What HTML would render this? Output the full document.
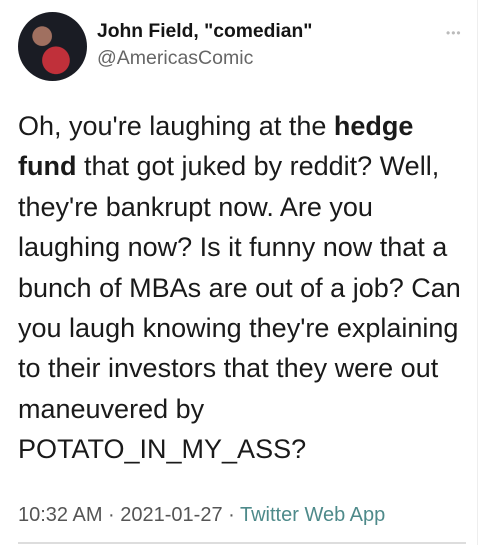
<!DOCTYPE html>
<html><head><style>
body{margin:0;width:486px;height:545px;background:#fff;overflow:hidden;position:relative;font-family:"Liberation Sans",Arial,sans-serif;}
.av{position:absolute;left:18px;top:12px;width:69px;height:69px;border-radius:50%;background:radial-gradient(circle at 55% 70%,#c0303a 0 22%,transparent 23%),radial-gradient(circle at 35% 35%,#a07060 0 15%,transparent 16%),#1a1c24;overflow:hidden}
.name{position:absolute;left:97px;top:21px;font-size:19.3px;font-weight:bold;color:#141414}
.handle{position:absolute;left:97px;top:47px;font-size:19.5px;color:#666}
.dots{position:absolute;left:446px;top:26px;color:#bbb;font-size:12px;letter-spacing:1px}
.txt{position:absolute;left:18px;top:106px;font-size:27px;line-height:40.4px;color:#1a1a1a;white-space:nowrap}
.time{position:absolute;left:18px;top:504px;font-size:20px;color:#555}
.time span{color:#4e8a8a}
.vl{position:absolute;left:477px;top:0;width:1px;height:545px;background:#eee}
.hl{position:absolute;left:18px;top:542px;width:448px;height:2px;background:#ddd}
</style></head><body>
<div class="av"></div>
<div class="name">John Field, "comedian"</div>
<div class="handle">@AmericasComic</div>
<div class="dots">•••</div>
<div class="txt">Oh, you're laughing at the <b>hedge</b><br><b>fund</b> that got juked by reddit? Well,<br>they're bankrupt now. Are you<br>laughing now? Is it funny now that a<br>bunch of MBAs are out of a job? Can<br>you laugh knowing they're explaining<br>to their investors that they were out<br>maneuvered by<br>POTATO_IN_MY_ASS?</div>
<div class="time">10:32 AM · 2021-01-27 · <span>Twitter Web App</span></div>
<div class="vl"></div><div class="hl"></div>
</body></html>
